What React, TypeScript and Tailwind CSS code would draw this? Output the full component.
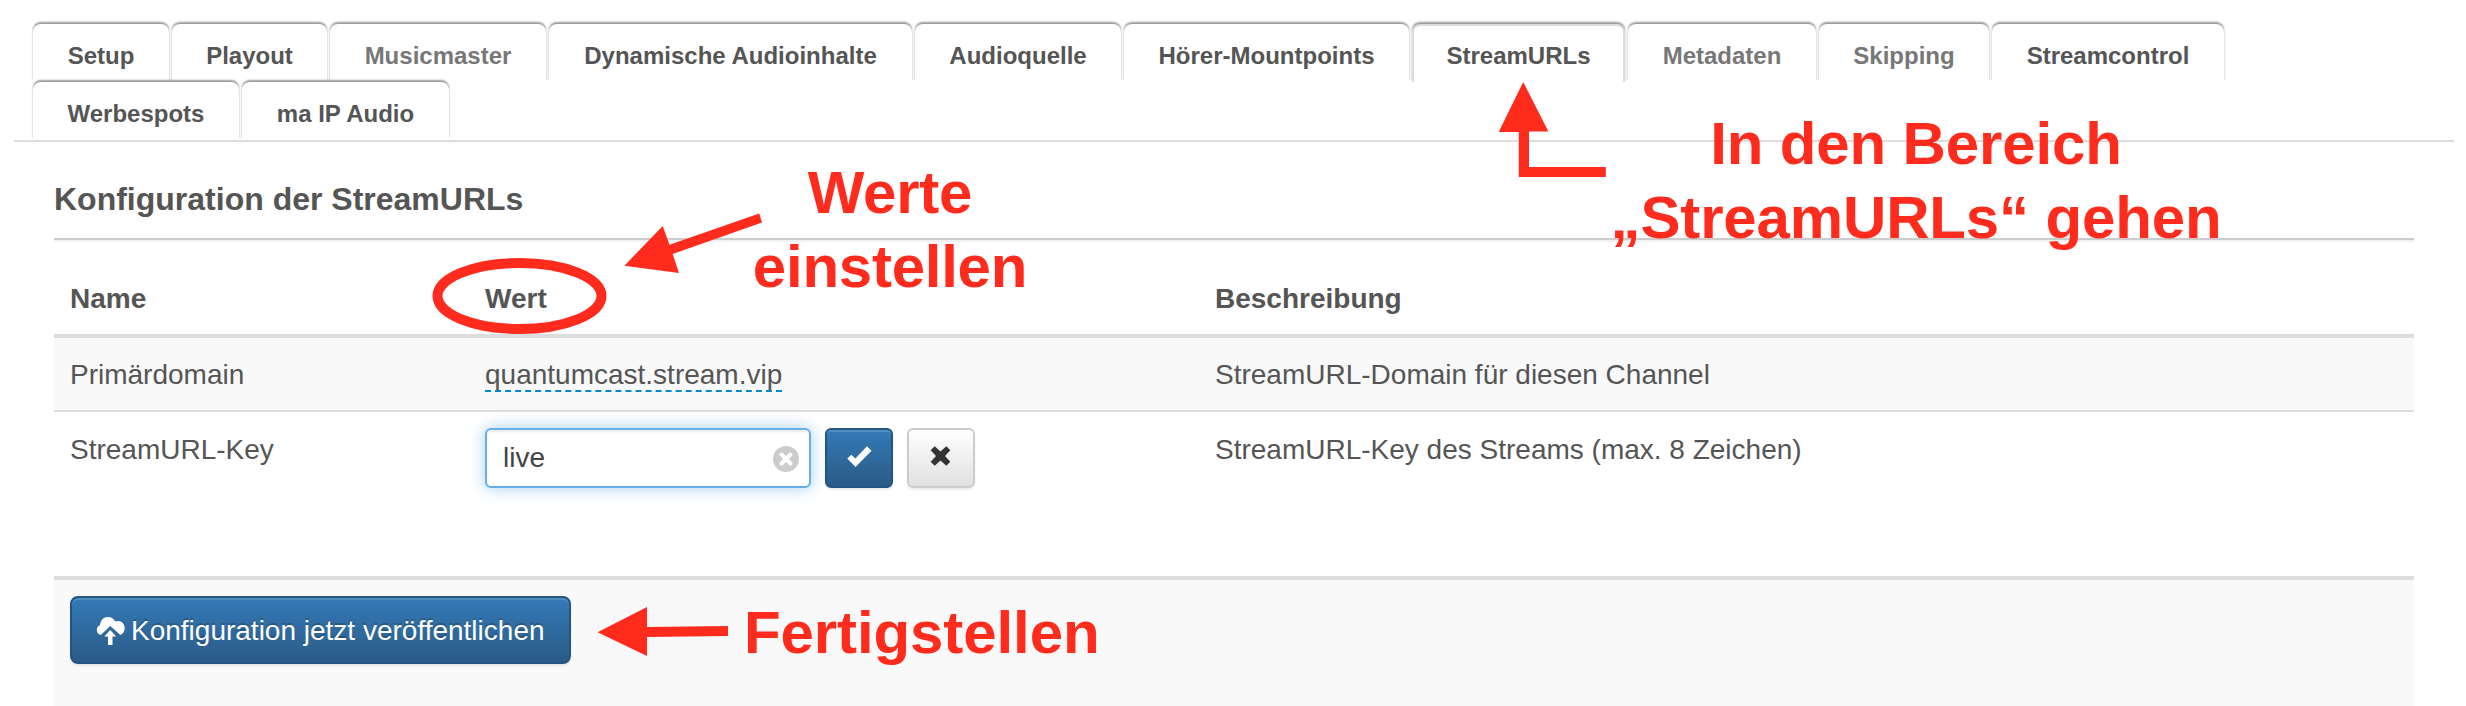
type Tab = { label: string; width: string; muted?: boolean; active?: boolean };

const firstRow: Tab[] = [
  { label: "Setup", width: "w-[136px]" },
  { label: "Playout", width: "w-[155px]" },
  { label: "Musicmaster", width: "w-[216px]", muted: true },
  { label: "Dynamische Audioinhalte", width: "w-[363px]" },
  { label: "Audioquelle", width: "w-[206px]" },
  { label: "Hörer-Mountpoints", width: "w-[285px]" },
  { label: "StreamURLs", width: "w-[213px]", active: true },
  { label: "Metadaten", width: "w-[188px]", muted: true },
  { label: "Skipping", width: "w-[170px]", muted: true },
  { label: "Streamcontrol", width: "w-[232px]" },
];

const secondRow: Tab[] = [
  { label: "Werbespots", width: "w-[206px]" },
  { label: "ma IP Audio", width: "w-[207px]" },
];

function TabItem({ label, width, muted, active }: Tab) {
  return (
    <div
      className={`${width} flex h-[58px] shrink-0 justify-center rounded-t-lg bg-white text-2xl leading-10 font-bold whitespace-nowrap shadow-[0_-2px_2px_#999] ${
        active ? "border-x-2 border-t-2 border-[#ddd] pt-[10px]" : "pt-3"
      } ${muted ? "text-[#777]" : "text-[#555]"}`}
    >
      {label}
    </div>
  );
}

function CloudUpload() {
  return (
    <svg className="mr-1.5 h-[30px] w-[29px]" viewBox="0 0 29 30" fill="#fff">
      <path d="M5 18.8A5 5 0 0 1 4 9.2C4.300 4.500 7.500 1 12 1C15.300 1 17.800 2.800 19.200 5.600C20 5.200 21 5 22 5C26 5 28.700 8.200 28.700 12.200C28.700 15.500 26.800 18.200 24.300 19L14.300 10z" />
      <path d="M14.200 14L20.200 20.500H16.500V29H12V20.500H8.300z" />
    </svg>
  );
}

export default function App() {
  return (
    <div className="relative h-[706px] w-[2466px] overflow-hidden bg-white font-['Liberation_Sans',Arial,sans-serif] text-[28px] leading-10 text-[#555]">
      <nav className="mr-[12px] ml-[14px] flex h-[142px] flex-col border-b-2 border-[#ddd] pt-6 pl-[19px]">
        <div className="flex h-[58px] gap-[3px]">
          {firstRow.map((t) => (
            <TabItem key={t.label} {...t} />
          ))}
        </div>
        <div className="flex h-[58px] gap-[3px]">
          {secondRow.map((t) => (
            <TabItem key={t.label} {...t} />
          ))}
        </div>
      </nav>
      <main className="ml-[54px] w-[2360px]">
        <h1 className="h-[98px] border-b-2 border-[#ccc] pt-[37px] text-[32px] font-bold">Konfiguration der StreamURLs</h1>
        <div className="grid h-[98px] grid-cols-[415px_730px_1fr] border-t-2 border-b-4 border-t-[#f2f2f2] border-b-[#ddd] pt-[37px] pl-4 font-bold">
          <div>Name</div>
          <div>Wert</div>
          <div>Beschreibung</div>
        </div>
        <div className="grid h-[74px] grid-cols-[415px_730px_1fr] border-b-2 border-[#ddd] bg-[#f9f9f9] pt-[17px] pl-4">
          <div>Primärdomain</div>
          <div>
            <span className="inline-block h-[37px] border-b-2 border-dashed border-[#08c]">quantumcast.stream.vip</span>
          </div>
          <div>StreamURL-Domain für diesen Channel</div>
        </div>
        <div className="grid h-[164px] grid-cols-[415px_730px_1fr] pt-4 pl-4">
          <div className="pt-0.5">StreamURL-Key</div>
          <div className="flex items-start">
            <div className="flex h-[60px] w-[326px] items-center justify-between rounded-md border-2 border-[#66afe9] bg-white pr-[10px] pl-4 text-[#444] shadow-[inset_0_2px_2px_rgba(0,0,0,0.075),0_0_16px_rgba(102,175,233,0.6)]">
              <span>live</span>
              <svg className="mt-0.5 size-[26px]" viewBox="0 0 26 26">
                <circle cx="13" cy="13" r="13" fill="#ccc" />
                <path d="M8.5 8.5l9 9M17.5 8.5l-9 9" stroke="#fff" strokeWidth="4" strokeLinecap="round" />
              </svg>
            </div>
            <button className="ml-[14px] flex h-[60px] w-[68px] items-center justify-center rounded-md border-2 border-[#245580] bg-linear-to-b from-[#337ab7] to-[#2b5b87] shadow-[inset_0_2px_0_rgba(255,255,255,0.15),0_2px_2px_rgba(0,0,0,0.075)]">
              <svg className="size-7" viewBox="0 0 28 28">
                <path d="M2.300 14.500L6.300 10.800L10.300 14.600L22 2.300L26.500 6.700L10.500 23z" fill="#fff" />
              </svg>
            </button>
            <button className="ml-[14px] flex h-[60px] w-[68px] items-center justify-center rounded-md border-2 border-[#ccc] bg-linear-to-b from-white to-[#e0e0e0] shadow-[0_2px_2px_rgba(0,0,0,0.075)]">
              <svg className="size-7" viewBox="0 0 28 28">
                <path
                  d="M7.700 2.300L13.500 7.600L19.300 2.300L23.300 6.300L18 12L23.300 17.800L19.300 21.800L13.500 16.400L7.700 21.800L3.700 17.800L9 12L3.700 6.300z"
                  fill="#333"
                />
              </svg>
            </button>
          </div>
          <div className="pt-0.5">StreamURL-Key des Streams (max. 8 Zeichen)</div>
        </div>
        <div className="h-[130px] border-t-4 border-[#ddd] bg-[#f9f9f9] pt-4 pl-4">
          <button className="flex h-[68px] w-[501px] items-center rounded-lg border-2 border-[#245580] bg-linear-to-b from-[#337ab7] to-[#2b5b87] pt-0.5 pl-6 whitespace-nowrap text-white shadow-[inset_0_2px_0_rgba(255,255,255,0.15),0_2px_2px_rgba(0,0,0,0.075)] [text-shadow:0_-2px_0_rgba(0,0,0,0.2)]">
            <CloudUpload />
            Konfiguration jetzt veröffentlichen
          </button>
        </div>
      </main>
      <svg className="absolute inset-0 h-[706px] w-[2466px]" viewBox="0 0 2466 706" fill="#ff2c1e">
        <ellipse cx="519.500" cy="296" rx="82" ry="33" fill="none" stroke="#ff2c1e" strokeWidth="10" />
        <path d="M624.4 265.7L662.7 226 669.5 244.7 759.2 213.600 762 222.5 672.700 254 679 273z" />
        <path d="M1523.2 82L1548.4 131.5H1529V167H1605.8V177H1518.8V132H1498.7z" />
        <path d="M597.5 632.3L647 607V627L728 626V636L647 637V656z" />
      </svg>
      <div className="absolute top-[156px] left-[740px] w-[300px] text-center text-[60px] leading-[74px] font-bold tracking-[-0.25px] whitespace-nowrap text-[#ff2c1e]">
        Werte
        <br />
        einstellen
      </div>
      <div className="absolute top-[107px] left-[1566px] w-[700px] text-center text-[60px] leading-[74px] font-bold tracking-[-0.15px] whitespace-nowrap text-[#ff2c1e]">
        In den Bereich
        <br />
        „StreamURLs“ gehen
      </div>
      <div className="absolute top-[596px] left-[744px] text-[60px] leading-[74px] font-bold tracking-[-0.1px] whitespace-nowrap text-[#ff2c1e]">
        Fertigstellen
      </div>
    </div>
  );
}
